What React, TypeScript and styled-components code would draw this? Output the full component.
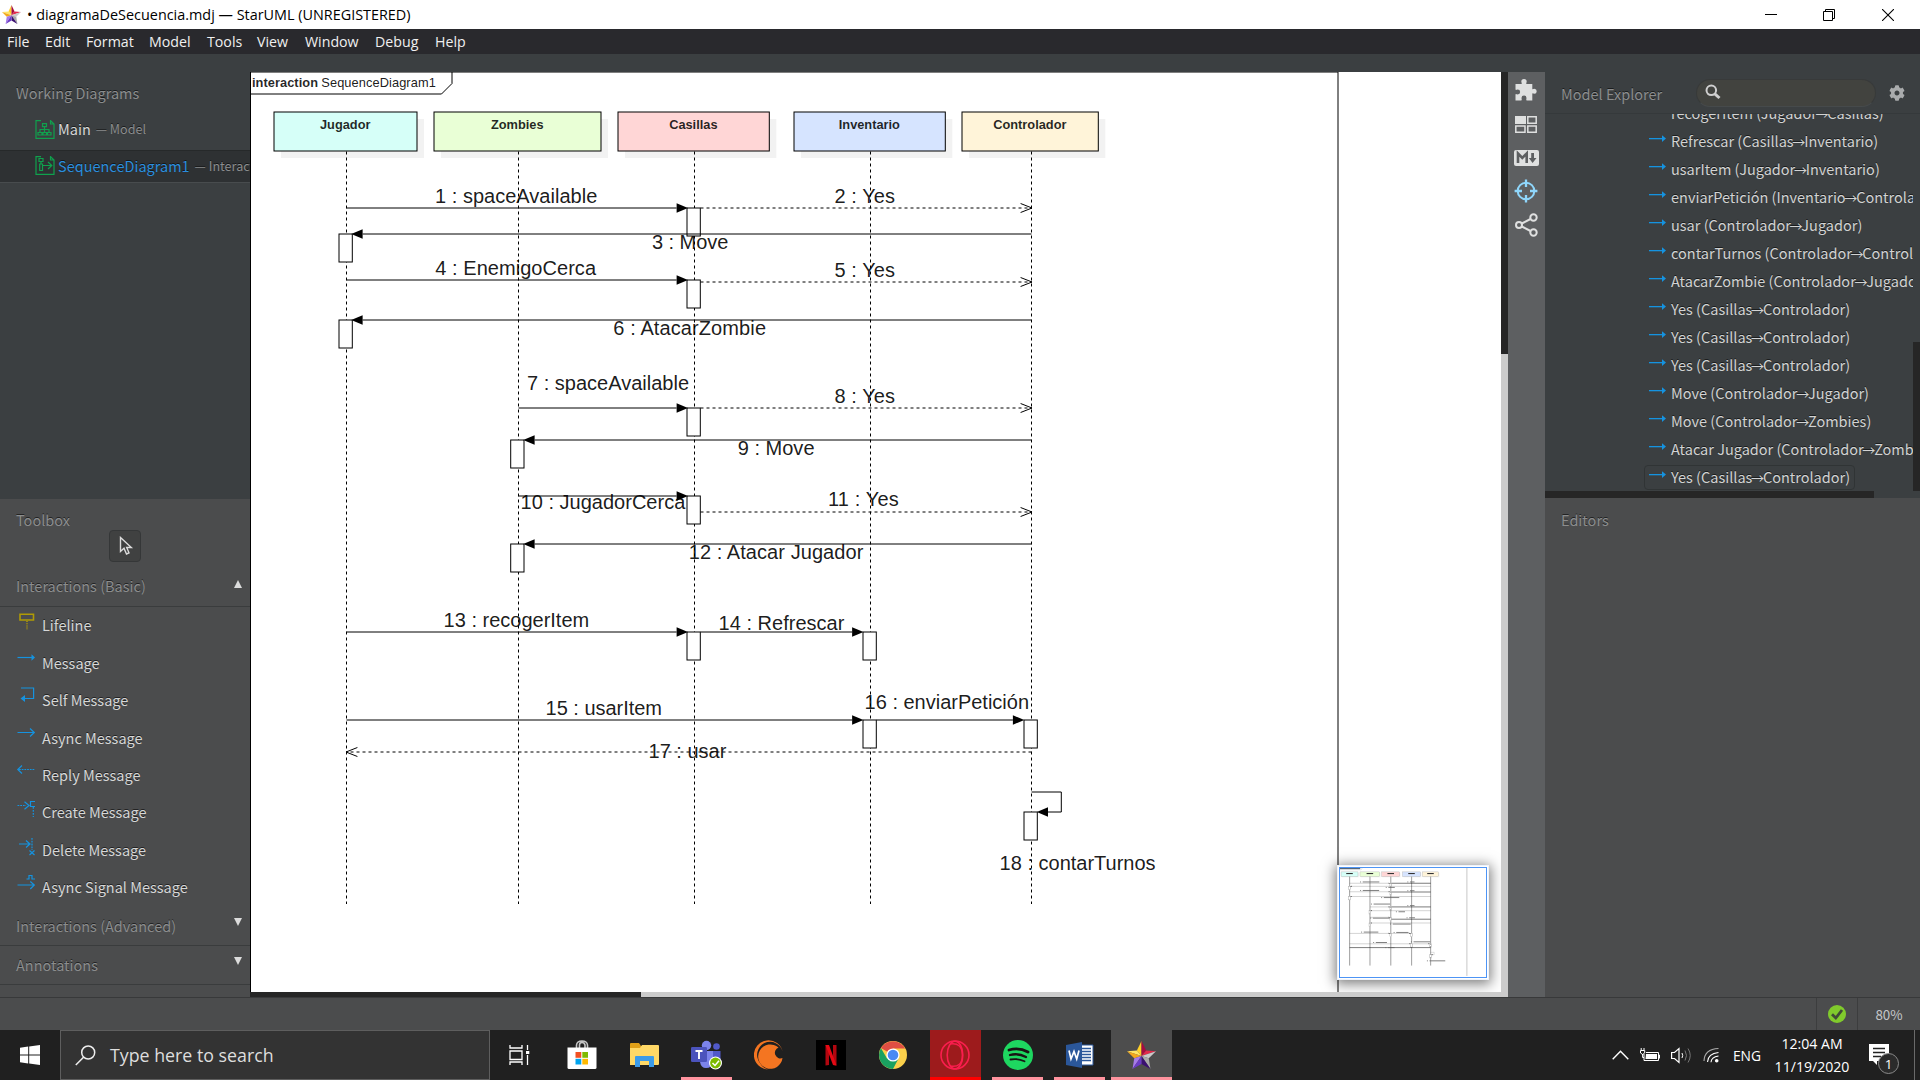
import React from 'react';
import styled, { createGlobalStyle, css } from 'styled-components';
import { FaCog } from 'react-icons/fa';

const UI = `"Noto Sans CJK SC", "Open Sans", sans-serif`;
const SYSTEM = `"Open Sans", "Noto Sans", sans-serif`;
const DIAGRAM = `"Liberation Sans", Arial, sans-serif`;

const GlobalStyle = createGlobalStyle`
  * { box-sizing: border-box; }
  body { margin: 0; overflow: hidden; background: #4b4c4d; }
  svg { display: block; flex: none; }
`;

/* ---------- window frame ---------- */

const Screen = styled.div`
  width: 1920px;
  height: 1080px;
  display: flex;
  flex-direction: column;
  overflow: hidden;
  font-family: ${UI};
  font-size: 14.5px;
  white-space: nowrap;
`;

const TitleBar = styled.header`
  height: 29px;
  flex: none;
  display: flex;
  align-items: center;
  padding-left: 2px;
  background: #fff;
  color: #000;
  font-family: ${SYSTEM};
  font-size: 14.4px;
`;

const Title = styled.span`
  flex: 1;
  padding-left: 6px;
`;

const WindowControls = styled.div`
  display: flex;
  padding-right: 26px;
  gap: 46px;
`;

const MenuBar = styled.nav`
  height: 25px;
  flex: none;
  display: flex;
  align-items: center;
  gap: 16px;
  padding: 0 7px;
  background: #29292d;
  color: #f0f0f0;
  font-family: ${SYSTEM};
  font-size: 14.2px;
`;

const MenuItem = styled.span<{ $w: number }>`
  width: ${p => p.$w}px;
`;

const Workspace = styled.main`
  height: 943px;
  flex: none;
  display: flex;
  padding-top: 18px;
  background: #3b3f41;
`;

/* ---------- left side ---------- */

const shadowText = css`
  text-shadow: 0 -1px 0 rgba(0, 0, 0, 0.55);
`;

const LeftSide = styled.aside`
  width: 250px;
  flex: none;
  display: flex;
  flex-direction: column;
  overflow: hidden;
`;

const PanelTitle = styled.div`
  color: #8b8d8e;
  ${shadowText}
`;

const WorkingDiagrams = styled.section`
  height: 427px;
  flex: none;
  padding-top: 10px;

  ${PanelTitle} {
    height: 22px;
    line-height: 22px;
    padding-left: 16px;
    margin-bottom: 10px;
  }
`;

const DiagramRow = styled.div<{ $active?: boolean }>`
  height: ${p => (p.$active ? 33 : 32)}px;
  margin-top: ${p => (p.$active ? 4 : 0)}px;
  display: flex;
  align-items: center;
  padding: 0 0 2px 35px;
  gap: 3px;
  color: ${p => (p.$active ? '#2a8ede' : '#d6d7d7')};
  background: ${p => (p.$active ? '#2e3133' : 'transparent')};
  border-top: 1px solid ${p => (p.$active ? '#26292a' : 'transparent')};
  border-bottom: 1px solid ${p => (p.$active ? '#484c4e' : 'transparent')};
  ${shadowText}

  span { margin-top: -1px; }
`;

const DiagramOwner = styled.span`
  color: #8b8d8e;
  font-size: 12.6px;
  padding-left: 2px;
`;

const Toolbox = styled.section`
  flex: 1;
  display: flex;
  flex-direction: column;
  background: #4b4c4d;
  padding-top: 10px;

  & > ${PanelTitle} {
    height: 21px;
    line-height: 22px;
    padding-left: 16px;
  }
`;

const SelectButton = styled.div`
  width: 32px;
  height: 32px;
  flex: none;
  margin: 0 0 6px 109px;
  display: flex;
  align-items: center;
  justify-content: center;
  padding-left: 2px;
  border: 1px solid #353738;
  border-radius: 4px;
  background: #404141;
`;

const GroupHeader = styled.div<{ $open?: boolean }>`
  height: 39px;
  flex: none;
  display: flex;
  align-items: center;
  justify-content: space-between;
  padding: 0 8px ${p => (p.$open ? 3 : 0)}px 16px;
  color: #8b8d8e;
  border-bottom: 1px solid #3a3c3d;
  ${shadowText}
`;

const Triangle = styled.i<{ $up?: boolean }>`
  margin-bottom: ${p => (p.$up ? 4 : 7)}px;
  border: 4.5px solid transparent;
  border-top-width: ${p => (p.$up ? 0 : 8)}px;
  border-bottom-width: ${p => (p.$up ? 8 : 0)}px;
  border-${p => (p.$up ? 'bottom' : 'top')}-color: #dcdcdc;
`;

const ToolRow = styled.div`
  height: 37.45px;
  flex: none;
  display: flex;
  align-items: center;
  gap: 7px;
  padding: 0 0 2px 17px;
  color: #d6d7d7;
  ${shadowText}

  svg { margin-bottom: 7px; }
`;

/* ---------- canvas ---------- */

const CanvasColumn = styled.section`
  width: 1258px;
  flex: none;
  display: flex;
  flex-direction: column;
`;

const CanvasBody = styled.div`
  height: 920px;
  display: flex;
`;

const Sheet = styled.div`
  width: 1251px;
  position: relative;
  background: #fff;
  overflow: hidden;
`;

const VScroll = styled.div<{ $top: number; $size: number; $track: string }>`
  width: 7px;
  flex: none;
  padding-top: ${p => p.$top}px;
  background: ${p => p.$track};

  &::before {
    content: '';
    display: block;
    height: ${p => p.$size}px;
    background: #262626;
  }
`;

const HScroll = styled.div<{ $size: number; $h: number; $track: string }>`
  height: ${p => p.$h}px;
  flex: none;
  background: ${p => p.$track};

  &::before {
    content: '';
    display: block;
    width: ${p => p.$size}px;
    height: 100%;
    background: #262626;
  }
`;

const MiniMap = styled.div`
  position: absolute;
  right: 12px;
  bottom: 12px;
  width: 152px;
  height: 115px;
  padding: 2px;
  background: #eef3fb;
  box-shadow: 0 2px 12px 2px rgba(0, 0, 0, 0.5);
`;

const MiniView = styled.div`
  width: 148px;
  height: 111px;
  border: 1.6px solid #4d94f5;
  background: #fff;
  outline: 1px solid #fff;
`;

/* ---------- right side ---------- */

const ToolStrip = styled.div`
  width: 37px;
  flex: none;
  display: flex;
  flex-direction: column;
  align-items: center;
  padding-top: 5px;
  background: #5d5f61;
  color: #dfe0e0;
`;

const StripButton = styled.div<{ $h: number; $on?: boolean }>`
  height: ${p => p.$h}px;
  display: flex;
  align-items: center;
  padding-right: 1px;
  color: ${p => (p.$on ? '#8fd6fb' : 'inherit')};
`;

const RightSide = styled.aside`
  width: 375px;
  flex: none;
  display: flex;
  flex-direction: column;
`;

const ExplorerHeader = styled.div`
  height: 42px;
  flex: none;
  display: flex;
  align-items: center;
  padding: 1px 15px 0 16px;
  border-bottom: 1px solid #35393b;
  color: #a9abac;

  ${PanelTitle} { width: 135px; }
`;

const SearchBox = styled.div`
  width: 181px;
  height: 28px;
  margin: -1px 13px 0 0;
  display: flex;
  align-items: center;
  padding: 0 0 1px 8px;
  border-radius: 14px;
  border: 1px solid #383a3a;
  border-bottom-color: #464a4b;
  background: #42433f;
`;

const Tree = styled.div`
  height: 377px;
  flex: none;
  display: flex;
`;

const TreeRows = styled.div`
  width: 368px;
  overflow: hidden;
  padding-left: 99px;
`;

const TreeRow = styled.div`
  width: max-content;
  height: 28px;
  display: flex;
  align-items: center;
  color: #d2d3d3;
  ${shadowText}

  &:first-child { margin-top: -15px; }
`;

const TreeLabel = styled.div<{ $boxed?: boolean }>`
  height: 25px;
  display: flex;
  align-items: center;
  gap: 5px;
  padding: 0 4px 1px;
  border: 1px solid ${p => (p.$boxed ? '#303435' : 'transparent')};
  border-radius: 4px;

  svg { margin-bottom: 5px; }
  & > span { margin-top: -1px; }
`;

const Arrow = styled.span`
  display: inline-block;
  width: 10.5px;
  text-indent: -1.3px;
  font-size: 13px;
  line-height: 14px;
  overflow: visible;
`;

const Editors = styled.section`
  flex: 1;
  padding: 11px 0 0 16px;
  background: #4b4c4d;
`;

/* ---------- status bar ---------- */

const StatusBar = styled.footer`
  height: 33px;
  flex: none;
  display: flex;
  justify-content: flex-end;
  background: #4b4c4d;
  border-top: 1px solid #38393a;
  color: #c3c5c8;
  font-size: 13.4px;
`;

const StatusCell = styled.div<{ $w: number }>`
  width: ${p => p.$w}px;
  display: flex;
  align-items: center;
  justify-content: center;
  padding-bottom: 1px;
  border-left: 1px solid #3c3d3e;
`;

/* ---------- taskbar ---------- */

const Taskbar = styled.footer`
  height: 50px;
  flex: none;
  display: flex;
  background: #202020;
  color: #fff;
  font-family: ${SYSTEM};
`;

const StartButton = styled.div`
  width: 60px;
  display: flex;
  align-items: center;
  justify-content: center;
`;

const SearchField = styled.div`
  width: 430px;
  display: flex;
  align-items: center;
  gap: 14px;
  padding-left: 14px;
  border: 1px solid #5e5e5e;
  background: #333;
  color: #dedede;
  font-size: 17.8px;
`;

const Apps = styled.div`
  display: flex;
  margin-left: -1px;
`;

const AppSlot = styled.div`
  width: 62.2px;
  display: flex;
  justify-content: center;
`;

const AppTile = styled.div<{ $w?: number; $bg?: string; $line?: string }>`
  width: ${p => p.$w ?? 51}px;
  display: flex;
  align-items: center;
  justify-content: center;
  background: ${p => p.$bg ?? 'transparent'};
  border-bottom: 3px solid ${p => p.$line ?? 'transparent'};
  padding-top: 3px;
`;

const Tray = styled.div`
  flex: 1;
  display: flex;
  align-items: center;
  justify-content: flex-end;
  font-size: 14.1px;
`;

const TrayIcons = styled.div`
  display: flex;
  align-items: center;
  gap: 11px;
`;

const Language = styled.span`
  margin-left: 13px;
  font-size: 13.8px;
`;

const Clock = styled.div`
  width: 103px;
  padding-right: 1px;
  text-align: center;
  line-height: 23px;
`;

const Notifications = styled.div`
  width: 50px;
  height: 100%;
  display: flex;
  align-items: center;
  padding: 8px 0 0 5px;
`;

const ShowDesktop = styled.div`
  width: 6px;
  height: 100%;
  border-left: 1px solid #6a6a6a;
`;

/* ---------- sequence diagram ---------- */

const lifelines = [
  { name: 'Jugador', x: 274, w: 143, fill: '#d6fff8', line: 346.5 },
  { name: 'Zombies', x: 434, w: 167, fill: '#e9ffd6', line: 518.5 },
  { name: 'Casillas', x: 618, w: 151.3, fill: '#ffd6d6', line: 694.5 },
  { name: 'Inventario', x: 794, w: 151.3, fill: '#d6e4ff', line: 870.5 },
  { name: 'Controlador', x: 962, w: 136.3, fill: '#fff4d9', line: 1031.5 },
];

type Kind = 'sync' | 'reply';
interface Message { text: string; tx: number; ty: number; end: number; y: number; from: number; to: number; kind: Kind }

const m = (text: string, tx: number, end: number, ty: number, y: number, from: number, to: number, kind: Kind = 'sync'): Message =>
  ({ text, tx, ty, end, y, from, to, kind });

const messages: Message[] = [
  m('1 : spaceAvailable', 435, 597.3, 203, 208, 346.5, 688),
  m('2 : Yes', 834.5, 895, 203, 208, 700.5, 1032, 'reply'),
  m('3 : Move', 652, 728.3, 249, 234, 1031.5, 351.2),
  m('4 : EnemigoCerca', 435.3, 596, 275, 280, 346.5, 688),
  m('5 : Yes', 834.5, 895, 277, 282, 700.5, 1032, 'reply'),
  m('6 : AtacarZombie', 613.3, 766, 335, 320, 1031.5, 351.2),
  m('7 : spaceAvailable', 527, 689, 390, 408, 518.5, 688),
  m('8 : Yes', 834.5, 895, 403, 408, 700.5, 1032, 'reply'),
  m('9 : Move', 737.7, 814.5, 455, 440, 1031.5, 523.2),
  m('10 : JugadorCerca', 520.6, 685.3, 509, 496, 518.5, 688),
  m('11 : Yes', 828, 898.7, 506, 512, 700.5, 1032, 'reply'),
  m('12 : Atacar Jugador', 688.7, 863.3, 559, 544, 1031.5, 523.2),
  m('13 : recogerItem', 443.6, 589.2, 627, 632, 346.5, 688),
  m('14 : Refrescar', 718.6, 844.4, 630, 632, 700.5, 863.5),
  m('15 : usarItem', 545.6, 662, 715, 720, 346.5, 863.5),
  m('16 : enviarPetición', 864.6, 1029, 709, 720, 876.5, 1024.3),
  m('17 : usar', 648.6, 726.3, 758, 752, 1031.5, 346, 'reply'),
];

const activations: [number, number][] = [
  [687, 208], [687, 280], [339, 234], [339, 320], [687, 408], [510.7, 440], [687, 496],
  [510.7, 544], [687, 632], [863, 632], [863, 720], [1024, 720], [1024, 812],
];

const Drawing = styled.svg`
  font-family: ${DIAGRAM};
  font-size: 20px;
`;

function MessageLine({ msg, mini }: { msg: Message; mini?: boolean }) {
  const dir = msg.to > msg.from ? 1 : -1;
  const base = msg.to - dir * 11.4;
  const dashed = msg.kind === 'reply';
  return (
    <g stroke="#000" strokeWidth={mini ? (dashed ? 8 : 1.5) : 1} strokeOpacity={mini && dashed ? 0.55 : 1}>
      <line x1={msg.from} x2={dashed ? msg.to : base} y1={msg.y} y2={msg.y} strokeDasharray={dashed && !mini ? '3 3' : undefined} />
      {dashed
        ? !mini && <path d={`M${base} ${msg.y - 4.5}L${msg.to} ${msg.y}L${base} ${msg.y + 4.5}`} fill="none" />
        : <path d={`M${base} ${msg.y - 4.7}L${msg.to} ${msg.y}L${base} ${msg.y + 4.7}Z`} stroke="none" fill="#000" />}
    </g>
  );
}

function SequenceDiagram({ mini }: { mini?: boolean }) {
  return (
    <>
      <path d="M250.5 992V72H1338V992" fill="none" stroke={mini ? '#bbb' : '#000'} strokeWidth={mini ? 7 : 1} />
      <path d="M251 94H441.5L452 83.5V72" fill="none" stroke="#000" />
      {lifelines.map(l => (
        <g key={l.name}>
          <rect x={l.x + 7} y={119} width={l.w} height={39} fill="#f2f2f2" />
          <rect x={l.x} y={112} width={l.w} height={39} fill={l.fill} stroke={mini ? '#aaa' : '#000'} strokeWidth={mini ? 3 : 1} />
        </g>
      ))}
      {!mini && messages.map(x => (
        <text key={x.text} x={x.tx} y={x.ty} textLength={x.end - x.tx} fill="#000" fillOpacity={0.9}>{x.text}</text>
      ))}
      {lifelines.map(l => (
        <line key={l.name} x1={l.line} x2={l.line} y1={151.5} y2={904} stroke={mini ? '#999' : '#000'} strokeWidth={mini ? 8 : 1} strokeDasharray={mini ? undefined : '3 3'} />
      ))}
      {activations.map(([x, y]) => (
        <rect key={`${x}-${y}`} x={x} y={y} width={13.3} height={28} fill="#fff" stroke={mini ? '#aaa' : '#000'} strokeWidth={mini ? 4 : 1} />
      ))}
      {messages.map(x => <MessageLine key={x.text} msg={x} mini={mini} />)}
      <path d="M1031.5 792H1061.3V812H1048" fill="none" stroke="#000" />
      <path d="M1048 807.3L1036.8 812L1048 816.7Z" />
      {mini
        ? messages.map(x => <line key={x.text} x1={x.tx} x2={x.end} y1={x.ty - 6} y2={x.ty - 6} stroke="#666" strokeWidth={7} strokeDasharray="8 14 200" />)
        : (
          <>
            <text x={999.6} y={870} textLength={156} fillOpacity={0.9}>18 : contarTurnos</text>
            <text x={252} y={87} fontSize={12.8} fontWeight={700} textLength={66} fillOpacity={0.85}>interaction</text>
            <text x={321.3} y={87} fontSize={12.8} textLength={114.5} fillOpacity={0.9}>SequenceDiagram1</text>
            {lifelines.map(l => (
              <text key={l.name} x={l.x + l.w / 2 - 0.3} y={129} fontSize={12.8} fontWeight={700} textAnchor="middle" fillOpacity={0.85}>{l.name}</text>
            ))}
          </>
        )}
      {mini && (
        <>
          <line x1={1000} x2={1155} y1={864} y2={864} stroke="#666" strokeWidth={7} strokeDasharray="8 14 200" />
          <line x1={252} x2={436} y1={83} y2={83} stroke="#567" strokeWidth={11} />
          {lifelines.map(l => (
            <line key={l.name} x1={l.x + l.w / 2 - 28} x2={l.x + l.w / 2 + 28} y1={126} y2={126} stroke="#333" strokeWidth={9} />
          ))}
        </>
      )}
    </>
  );
}

/* ---------- icons ---------- */

const StarIcon = ({ w, h }: { w: number; h: number }) => (
  <svg width={w} height={h} viewBox="0 0 100 100" preserveAspectRatio="none">
    <path d="M50 0L50 54L34 34Z" fill="#ffd028" />
    <path d="M50 0L66 34L50 54Z" fill="#a50c40" />
    <path d="M0 37L34 34L50 54Z" fill="#ffe566" />
    <path d="M0 37L50 54L25 62Z" fill="#f2a81d" />
    <path d="M66 34L100 37L50 54Z" fill="#e22a4c" />
    <path d="M100 37L75 62L50 54Z" fill="#c9c9c9" />
    <path d="M50 54L75 62L81 100Z" fill="#a9a9a9" />
    <path d="M50 54L81 100L50 82Z" fill="#3a1070" />
    <path d="M50 54L25 62L19 100Z" fill="#a67be8" />
    <path d="M50 54L50 82L19 100Z" fill="#6b3ac6" />
  </svg>
);

const green = '#0fa14d';
const ModelIcon = () => (
  <svg width="20" height="19" viewBox="0 0 20 19" fill="none" stroke={green} strokeWidth="1.2">
    <path d="M1 0V18.3H19V4L15.5 .6V4H19M1 .7H6" />
    <path d="M7.5 3.6H11.5V6.6H7.5ZM9.5 6.6V12M5 12V9.5H14V12M3 12.5H7V15H3ZM8 12.5H11.5V15H8ZM12.5 12.5H16V15H12.5Z" />
  </svg>
);
const SequenceIcon = () => (
  <svg width="20" height="19" viewBox="0 0 20 19" fill="none" stroke={green} strokeWidth="1.2">
    <path d="M1 0V18.3H19V4L15.5 .6V4H19M1 .7H6" />
    <path d="M4 2.5H8V5.5H4ZM6 5.5V8M4.7 8H7.5V14.5H4.7ZM7.5 9.5H16.5M13 6L16.8 9.5L13 13" />
  </svg>
);

const blue = '#1593e0';
type ToolKind = 'lifeline' | 'message' | 'self' | 'async' | 'reply' | 'create' | 'delete' | 'signal';
const toolPaths: Record<ToolKind, React.ReactNode> = {
  lifeline: (
    <g stroke="#b09a05" strokeWidth="1.6"><path d="M3 2.3H16.5V8H3Z" /><path d="M10 9V18" strokeDasharray="1 1.2" /></g>
  ),
  message: <g><path d="M.5 7.5H16" /><path d="M14.5 4.3L18 7.5L14.5 10.7Z" fill={blue} stroke="none" /></g>,
  self: <g><path d="M4 1H16.6V11.5H7" /><path d="M8 8L3.5 11.5L8 15Z" fill={blue} stroke="none" /></g>,
  async: <path d="M.5 7.5H17M13 3.5L17.3 7.5L13 11.5" />,
  reply: <g><path d="M2 7.5H18" strokeDasharray="1.8 .9" /><path d="M5 3.5L.8 7.5L5 11.5" /></g>,
  create: <g><path d="M.5 6.5H9" strokeDasharray="1.8 .9" /><path d="M7.5 2.7L12 6.5L7.5 10.3M18 2.5H13.5V7.5H18" /><path d="M16.3 8V18" strokeDasharray="1.8 1.2" /></g>,
  delete: <g><path d="M2 7H13M9 3.5L13 7L9 10.5" /><path d="M15 1V13" strokeDasharray="1.8 1" /><path d="M12.5 13.5L17.5 18M17.5 13.5L12.5 18" /></g>,
  signal: <g><path d="M.5 11H17M13.3 7.5L17.3 11L13.3 15" /><path d="M9.5 5H12V1.5H15V5H18" /></g>,
};
const ToolIcon = ({ kind }: { kind: ToolKind }) => (
  <svg width="18" height="18" viewBox="0 0 18 18" overflow="visible" fill="none" stroke={blue} strokeWidth="1.2">{toolPaths[kind]}</svg>
);

const TreeArrow = () => (
  <svg width="17" height="9" viewBox="0 0 17 9"><path d="M0 4H14V5.3H0Z" fill={blue} /><path d="M13 1.2L17 4.6L13 8Z" fill={blue} /></svg>
);

const PuzzleIcon = () => (
  <svg width="22" height="22" viewBox="0 0 22 22" fill="currentColor">
    <path d="M.5 5H5.8C7.6 5 6.3 3.6 6.3 2.6A2.7 2.6 0 0 1 11.7 2.6C11.7 3.6 10.4 5 12.2 5H17.3V9.4C17.3 11 18.2 9.8 19.3 9.8A2.4 2.5 0 0 1 19.3 14.8C18.2 14.8 17.3 13.6 17.3 15.2V21.5H12.3C10.6 21.5 11.5 20 11.5 19A2.5 2.4 0 0 0 6.5 19C6.5 20 7.4 21.5 5.7 21.5H.5V15.8C.5 14.2 1.6 15.4 2.7 15.4A2.4 2.4 0 0 0 2.7 10.5C1.6 10.5 .5 11.7 .5 10Z" />
  </svg>
);

const tools: [ToolKind, string][] = [
  ['lifeline', 'Lifeline'], ['message', 'Message'], ['self', 'Self Message'], ['async', 'Async Message'],
  ['reply', 'Reply Message'], ['create', 'Create Message'], ['delete', 'Delete Message'], ['signal', 'Async Signal Message'],
];

const tree: [string, string, string][] = [
  ['recogerItem', 'Jugador', 'Casillas'], ['Refrescar', 'Casillas', 'Inventario'], ['usarItem', 'Jugador', 'Inventario'],
  ['enviarPetición', 'Inventario', 'Controlador'], ['usar', 'Controlador', 'Jugador'], ['contarTurnos', 'Controlador', 'Controlador'],
  ['AtacarZombie', 'Controlador', 'Jugador'], ['Yes', 'Casillas', 'Controlador'], ['Yes', 'Casillas', 'Controlador'],
  ['Yes', 'Casillas', 'Controlador'], ['Move', 'Controlador', 'Jugador'], ['Move', 'Controlador', 'Zombies'],
  ['Atacar Jugador', 'Controlador', 'Zombies'], ['Yes', 'Casillas', 'Controlador'],
];

const menus: [string, number][] = [
  ['File', 22], ['Edit', 25], ['Format', 47], ['Model', 42], ['Tools', 34], ['View', 32], ['Window', 54], ['Debug', 44], ['Help', 32],
];

const pink = '#ff939e';

export default function App() {
  return (
    <Screen>
      <GlobalStyle />
      <TitleBar>
        <StarIcon w={19} h={19} />
        <Title>• diagramaDeSecuencia.mdj — StarUML (UNREGISTERED)</Title>
        <WindowControls>
          <svg width="12" height="12"><path d="M0 5.5H12" stroke="#000" /></svg>
          <svg width="13" height="12" fill="none" stroke="#000"><path d="M.5 2.5H9.5V11.5H.5ZM2.5 2V.5H11.5V9.5H10" /></svg>
          <svg width="12" height="12"><path d="M0 0L12 12M12 0L0 12" stroke="#000" strokeWidth="1.1" /></svg>
        </WindowControls>
      </TitleBar>
      <MenuBar>{menus.map(([t, w]) => <MenuItem key={t} $w={w}>{t}</MenuItem>)}</MenuBar>

      <Workspace>
        <LeftSide>
          <WorkingDiagrams>
            <PanelTitle>Working Diagrams</PanelTitle>
            <DiagramRow><ModelIcon /><span>Main</span><DiagramOwner>— Model</DiagramOwner></DiagramRow>
            <DiagramRow $active><SequenceIcon /><span>SequenceDiagram1</span><DiagramOwner>— Interaction1</DiagramOwner></DiagramRow>
          </WorkingDiagrams>
          <Toolbox>
            <PanelTitle>Toolbox</PanelTitle>
            <SelectButton>
              <svg width="16" height="20" viewBox="0 0 16 20" fill="none" stroke="#dcdcdc" strokeWidth="1.4">
                <path d="M2.5 1.5V15.5L6 12.3L8.5 18L11 16.8L8.7 11.5H13.3Z" />
              </svg>
            </SelectButton>
            <GroupHeader $open>Interactions (Basic)<Triangle $up /></GroupHeader>
            {tools.map(([k, t]) => <ToolRow key={k}><ToolIcon kind={k} />{t}</ToolRow>)}
            <GroupHeader>Interactions (Advanced)<Triangle /></GroupHeader>
            <GroupHeader>Annotations<Triangle /></GroupHeader>
          </Toolbox>
        </LeftSide>

        <CanvasColumn>
          <CanvasBody>
            <Sheet>
              <Drawing width="1251" height="920" viewBox="250 72 1251 920"><SequenceDiagram /></Drawing>
              <MiniMap>
                <MiniView>
                  <Drawing width="145" height="108" viewBox="265 79 1226 913" preserveAspectRatio="xMinYMin meet"><SequenceDiagram mini /></Drawing>
                </MiniView>
              </MiniMap>
            </Sheet>
            <VScroll $top={0} $size={282} $track="#ccc" />
          </CanvasBody>
          <HScroll $size={391} $h={5} $track="#ccc" />
        </CanvasColumn>

        <ToolStrip>
          <StripButton $h={25}><PuzzleIcon /></StripButton>
          <StripButton $h={44}>
            <svg width="22" height="17" viewBox="0 0 22 17"><path d="M0 0H11V8H0Z" fill="currentColor" /><path d="M12.8 .8H21.2V7.2H12.8ZM.8 10H10V16.2H.8ZM12.8 10H21.2V16.2H12.8Z" fill="none" stroke="currentColor" strokeWidth="1.5" /></svg>
          </StripButton>
          <StripButton $h={24}>
            <svg width="25" height="16" viewBox="0 0 25 16"><rect width="25" height="16" rx="2" fill="currentColor" /><path d="M4 13V3.5L8.3 8L12.7 3.5V13" fill="none" stroke="#5d5f61" strokeWidth="2.6" /><path d="M17.2 3H20V8H22.5L18.6 13L14.8 8H17.2Z" fill="#5d5f61" /></svg>
          </StripButton>
          <StripButton $h={42} $on>
            <svg width="24" height="24" viewBox="0 0 24 24" fill="none" stroke="currentColor" strokeWidth="2"><circle cx="12" cy="12" r="8.3" /><path d="M12 .6V8M12 16V23.4M.6 12H8M16 12H23.4" strokeWidth="2.3" /></svg>
          </StripButton>
          <StripButton $h={25}>
            <svg width="23" height="24" viewBox="0 0 23 24" fill="none" stroke="currentColor" strokeWidth="2"><circle cx="4" cy="12" r="3" /><circle cx="18.5" cy="4.5" r="3.2" /><circle cx="18.5" cy="19.5" r="3.2" /><path d="M6.8 10.5L15.5 6M6.8 13.5L15.5 18" /></svg>
          </StripButton>
        </ToolStrip>

        <RightSide>
          <ExplorerHeader>
            <PanelTitle>Model Explorer</PanelTitle>
            <SearchBox>
              <svg width="16" height="16" viewBox="0 0 16 16" fill="none" stroke="#cfcfcf"><circle cx="6.3" cy="6.3" r="4.8" strokeWidth="2" /><path d="M9.8 9.8L14.5 14" strokeWidth="3" /></svg>
            </SearchBox>
            <FaCog size={16} />
          </ExplorerHeader>
          <Tree>
            <TreeRows>
              {tree.map(([name, from, to], i) => (
                <TreeRow key={i}>
                  <TreeLabel $boxed={i === tree.length - 1}>
                    <TreeArrow />
                    <span>{name} ({from}<Arrow>→</Arrow>{to})</span>
                  </TreeLabel>
                </TreeRow>
              ))}
            </TreeRows>
            <VScroll $top={228} $size={149} $track="transparent" />
          </Tree>
          <HScroll $size={329} $h={7} $track="#3b3f41" />
          <Editors><PanelTitle>Editors</PanelTitle></Editors>
        </RightSide>
      </Workspace>

      <StatusBar>
        <StatusCell $w={41}>
          <svg width="18" height="18" viewBox="0 0 18 18"><circle cx="9" cy="9" r="9" fill="#80ca2c" /><path d="M4 9.2L7.8 13L14 5" fill="none" stroke="#3f4a37" strokeWidth="2.8" /></svg>
        </StatusCell>
        <StatusCell $w={63}>80%</StatusCell>
      </StatusBar>

      <Taskbar>
        <StartButton>
          <svg width="20" height="20" viewBox="0 0 20 20" fill="#fff"><path d="M0 2.8L8.2 1.6V9.5H0ZM9.2 1.4L20 0V9.5H9.2ZM0 10.5H8.2V18.4L0 17.2ZM9.2 10.5H20V20L9.2 18.6Z" /></svg>
        </StartButton>
        <SearchField>
          <svg width="21" height="21" viewBox="0 0 21 21" fill="none" stroke="#eee" strokeWidth="1.5"><circle cx="13.2" cy="7.5" r="6.5" /><path d="M8.5 12.2L.8 20" /></svg>
          Type here to search
        </SearchField>
        <Apps>
          <AppSlot><AppTile>
            <svg width="22" height="20" viewBox="0 0 22 20" fill="none" stroke="#fff" strokeWidth="1.3"><path d="M1 0V3H13V0M1 6H13V14.5H1ZM1 20V17H13V20M18.5 0V5M18.5 10V20" /><path d="M17 6H20.3V9H17Z" fill="#fff" stroke="none" /></svg>
          </AppTile></AppSlot>
          <AppSlot><AppTile>
            <svg width="30" height="30" viewBox="0 0 30 30"><path d="M9.5 8V5Q10 1 15 1T20.5 5V8M12.5 8V5Q12.5 2.5 15 2.5T18 5V8" fill="none" stroke="#c6c6c6" strokeWidth="1.6" /><path d="M.5 7.5H29.5V27.5Q29.5 29 28 29H2Q.5 29 .5 27.5Z" fill="#fff" /><path d="M8.5 12H14.3V17.8H8.5Z" fill="#f25022" /><path d="M15.3 12H21V17.8H15.3Z" fill="#7fba00" /><path d="M8.5 18.8H14.3V24.5H8.5Z" fill="#00a4ef" /><path d="M15.3 18.8H21V24.5H15.3Z" fill="#ffb900" /></svg>
          </AppTile></AppSlot>
          <AppSlot><AppTile>
            <svg width="29" height="24" viewBox="0 0 29 24"><path d="M0 1Q0 0 1 0H9L11 3H28Q29 3 29 4V8H0Z" fill="#e0a018" /><path d="M0 5H10L12 2H28Q29 2 29 3V21Q29 22 28 22H0Z" fill="#ffd866" /><path d="M5 24V14Q5 13 6 13H23Q24 13 24 14V24H19V18H10V24Z" fill="#3c9be8" /></svg>
          </AppTile></AppSlot>
          <AppSlot><AppTile $line={pink}>
            <svg width="31" height="30" viewBox="0 0 31 30"><circle cx="15.5" cy="5.5" r="4.7" fill="#7b83eb" /><circle cx="25.5" cy="6.5" r="3.3" fill="#5059c9" /><path d="M20 11H29.5V19Q29 24 24 24H20Z" fill="#5059c9" /><path d="M9 11H22V22Q21 28 15 28Q10 28 9 22Z" fill="#7b83eb" /><rect y="7" width="16" height="15" rx="1.3" fill="#4b53bc" /><path d="M4.5 11H11.5M8 11V19" stroke="#fff" strokeWidth="1.9" /><circle cx="24.5" cy="23" r="6.5" fill="#fff" /><circle cx="24.5" cy="23" r="5.4" fill="#7cb900" /><path d="M21.5 23L24 25.5L28 20.8" fill="none" stroke="#fff" strokeWidth="1.5" /></svg>
          </AppTile></AppSlot>
          <AppSlot><AppTile>
            <svg width="30" height="30" viewBox="0 0 30 30" fill="#f47521"><path d="M14 29.5A14.6 14.6 0 1 1 28.8 12A13 13 0 1 0 6 23A13 13 0 0 0 14 29.5Z" /><path d="M24.5 7.5A12.2 12.2 0 1 0 28.5 18A5 5 0 1 1 24.5 7.5Z" /></svg>
          </AppTile></AppSlot>
          <AppSlot><AppTile>
            <svg width="30" height="30" viewBox="0 0 30 30"><path d="M0 0H30V30H0Z" /><path d="M9.5 5H13V25L9.5 25.5ZM17 5H20.5V25.5L17 25Z" fill="#b1060f" /><path d="M9.5 5H13L20.5 25.5L17 25Z" fill="#e50914" /></svg>
          </AppTile></AppSlot>
          <AppSlot><AppTile>
            <svg width="28" height="28" viewBox="0 0 28 28"><circle cx="14" cy="14" r="14" fill="#fbd04b" /><path d="M14 14L1.9 7A14 14 0 0 1 26.1 7.5H14Z" fill="#df4f43" /><path d="M1.9 7A14 14 0 0 0 14 28L19.5 17.5L14 14L8 17.5Z" fill="#1aa160" /><circle cx="14" cy="14" r="6.6" fill="#fff" /><circle cx="14" cy="14" r="5.3" fill="#4a8af4" /></svg>
          </AppTile></AppSlot>
          <AppSlot><AppTile $bg="#9d1b1c" $line="#ff0000">
            <svg width="30" height="30" viewBox="0 0 30 30" fill="none" stroke="#fa1e4e" strokeWidth="1.6"><circle cx="15" cy="15" r="14" /><ellipse cx="15" cy="15" rx="7.8" ry="13.8" /><path d="M10 4Q22 2 22.3 15T10 26" strokeWidth="1.3" /></svg>
          </AppTile></AppSlot>
          <AppSlot><AppTile $line={pink}>
            <svg width="30" height="30" viewBox="0 0 30 30" fill="none" stroke="#191414" strokeLinecap="round"><circle cx="15" cy="15" r="15" fill="#1ed760" stroke="none" /><path d="M6 10Q16 7 25 12" strokeWidth="2.8" /><path d="M7 15Q15 12.8 23 17" strokeWidth="2.3" /><path d="M7.5 19.5Q15 18 21.5 21.3" strokeWidth="1.8" /></svg>
          </AppTile></AppSlot>
          <AppSlot><AppTile $line={pink}>
            <svg width="28" height="26" viewBox="0 0 28 26"><path d="M14 3H27V23H14Z" fill="#fff" stroke="#2b579a" /><path d="M16 6.5H25M16 9.5H25M16 12.5H25M16 15.5H25M16 18.5H25" stroke="#2b579a" strokeWidth="1.4" /><path d="M0 3L16 0V26L0 23Z" fill="#2b579a" /><path d="M3 8.5L5 17L8 9.5L10.7 17L13 8.5" fill="none" stroke="#fff" strokeWidth="1.7" /></svg>
          </AppTile></AppSlot>
          <AppSlot><AppTile $w={61} $bg="#4d4d4d" $line={pink}><StarIcon w={29} h={28} /></AppTile></AppSlot>
        </Apps>

        <Tray>
          <TrayIcons>
            <svg width="17" height="10" viewBox="0 0 17 10" fill="none" stroke="#fff" strokeWidth="1.4"><path d="M.7 9.3L8.5 1.2L16.3 9.3" /></svg>
            <svg width="20" height="14" viewBox="0 0 20 14" fill="none" stroke="#fff"><path d="M4 6V12.5H18.5V4.5H6" /><path d="M6 6H17V11H5.5Z" fill="#fff" stroke="none" /><path d="M18.5 7H19.5V10.5M1.2 0V2M4 0V2M.5 2.5H4.7V5L2.6 6.5L.5 5ZM2.6 6V9.5H4" /></svg>
            <svg width="21" height="17" viewBox="0 0 21 17" fill="none" stroke="#fff"><path d="M.6 5.5H3.5L8 1.5V15.5L3.5 11.5H.6Z" strokeWidth="1.2" /><path d="M11 6Q12.4 8.5 11 11" /><path d="M14 3.5Q17 8.5 14 13.5M17 1.5Q21.5 8.5 17 15.5" stroke="#777" /></svg>
            <svg width="17" height="16" viewBox="0 0 17 16" fill="none" stroke="#fff" strokeWidth="1.1"><path d="M1 14Q1.5 2 15.5 1.5" stroke="#aaa" /><path d="M4.5 15Q5 6.5 15.5 5.5M8 15.3Q8.3 10 15.5 9" /><circle cx="13.7" cy="13.8" r="1.8" fill="#fff" stroke="none" /></svg>
          </TrayIcons>
          <Language>ENG</Language>
          <Clock>12:04 AM<br />11/19/2020</Clock>
          <Notifications>
            <svg width="32" height="32" viewBox="0 0 32 32"><path d="M0 1H20V18H8L8 22L4 18H0Z" fill="#fff" /><path d="M4 5.5H16M4 9.5H16M4 13.5H12" stroke="#222" strokeWidth="1.3" /><circle cx="19.5" cy="20.5" r="10" fill="#2b2b2b" stroke="#8a8a8a" /><text x="19.5" y="25.5" fill="#fff" fontSize="13.5" textAnchor="middle">1</text></svg>
          </Notifications>
          <ShowDesktop />
        </Tray>
      </Taskbar>
    </Screen>
  );
}
